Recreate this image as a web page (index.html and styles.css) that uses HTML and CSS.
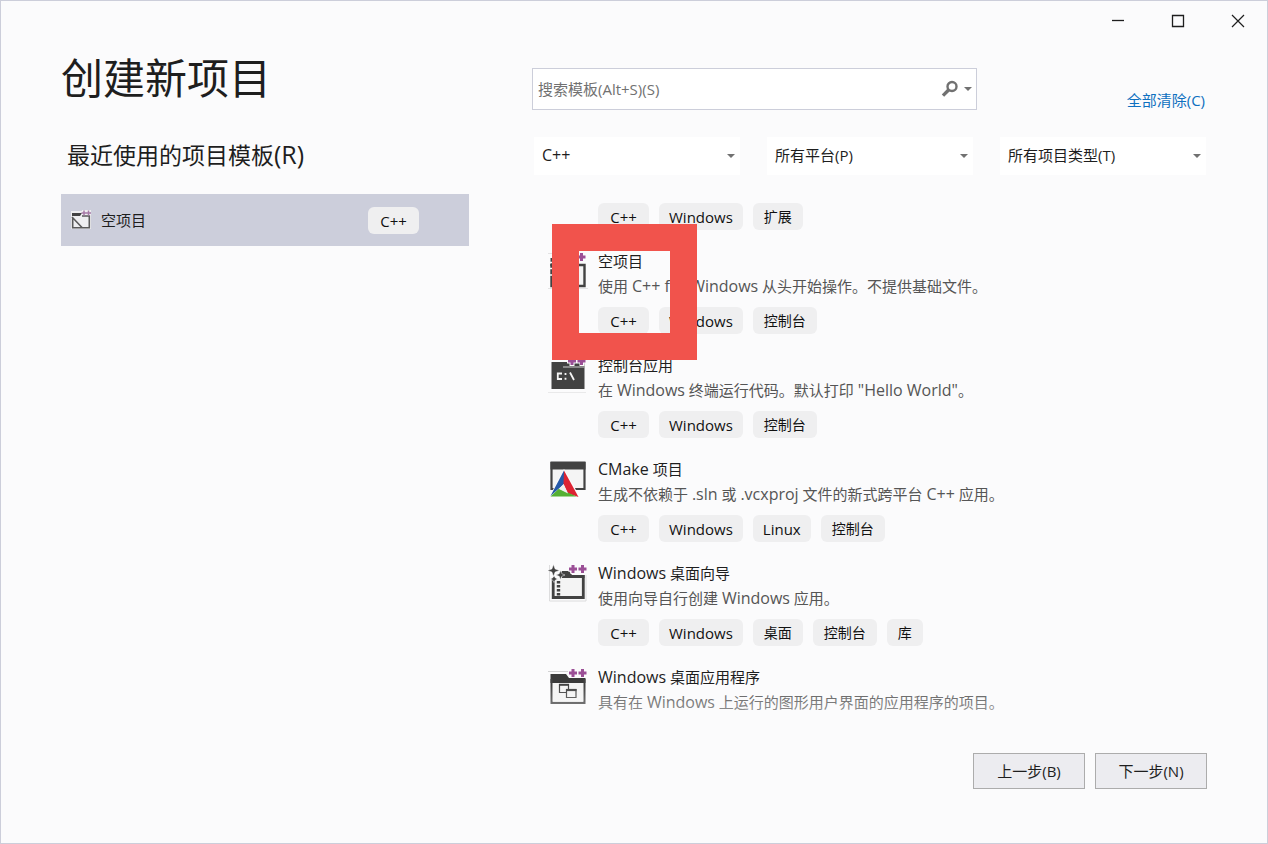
FILE: index.html
```html
<!DOCTYPE html>
<html lang="zh-CN">
<head>
<meta charset="utf-8">
<meta name="viewport" content="width=device-width, initial-scale=1">
<title>创建新项目</title>
<link rel="stylesheet" href="styles.css">
</head>
<body>
<svg class="sprite" aria-hidden="true">
  <symbol id="plusplus" viewBox="0 0 20 10">
    <path d="M5 0v10M0 5h10M15 0v10M10 5h10" stroke="#fbfbfc" stroke-width="5"/>
    <path d="M5 1v8M1 5h8M14.500 1v8M10.500 5h8" stroke="#9b4f96" stroke-width="3"/>
  </symbol>
  <symbol id="caret" viewBox="0 0 8 4"><path d="M0 0h8L4 4z" fill="#717171"/></symbol>
</svg>
<div class="window">
  <header class="titlebar">
    <button type="button" aria-label="最小化"><svg width="14" height="14" viewBox="0 0 14 14"><path d="M1 6.500h12" stroke="#1e1e1e" stroke-width="1.300"/></svg></button>
    <button type="button" aria-label="最大化"><svg width="14" height="14" viewBox="0 0 14 14"><path d="M1.500 1.500h11v11h-11z" fill="none" stroke="#1e1e1e" stroke-width="1.300"/></svg></button>
    <button type="button" aria-label="关闭"><svg width="14" height="14" viewBox="0 0 14 14"><path d="M1 1l12 12M13 1L1 13" stroke="#1e1e1e" stroke-width="1.200"/></svg></button>
  </header>

  <main class="content">
    <section class="recent">
      <h1>创建新项目</h1>
      <h2>最近使用的项目模板<span class="latin-large">(R)</span></h2>
      <button type="button" class="recent-item">
        <svg width="20" height="20" viewBox="0 0 20 20"><path d="M0 1h20v18H0z" fill="#eeeef0"/><path d="M1 3h10l-2 3H1z" fill="#424242"/><path d="M1.700 8v9.800h16.600V6H11M1 7l10 10.500" fill="none" stroke="#5a5a5a" stroke-width="1.600"/><path d="M11 0h9v5h-9z" fill="#eeeef0"/><path d="M13 .5v5M10.500 3h5M17.500 .5v5M15.500 3h4.500" stroke="#a77aa6" stroke-width="1.500"/></svg>
        <span class="recent-name">空项目</span>
        <span class="tag latin-tag cpp">C++</span>
      </button>
    </section>

    <section class="templates">
      <div class="search-row">
        <div class="search">
          <input type="text" aria-label="搜索模板" placeholder="搜索模板(Alt+S)(S)">
          <button type="button" aria-label="搜索"><svg width="18" height="18" viewBox="0 0 18 18"><circle cx="11" cy="6.500" r="4.500" fill="none" stroke="#717171" stroke-width="2.400"/><path d="M7.800 9.800L2 15.600" stroke="#717171" stroke-width="3.400"/></svg></button>
          <button type="button" aria-label="搜索选项"><svg width="8" height="4"><use href="#caret"/></svg></button>
        </div>
        <a href="#" class="clear">全部清除(C)</a>
      </div>

      <div class="filters">
        <div class="filter"><select aria-label="语言" class="language"><option>C++</option></select><svg width="8" height="4"><use href="#caret"/></svg></div>
        <div class="filter"><select aria-label="平台"><option>所有平台(P)</option></select><svg width="8" height="4"><use href="#caret"/></svg></div>
        <div class="filter"><select aria-label="项目类型"><option>所有项目类型(T)</option></select><svg width="8" height="4"><use href="#caret"/></svg></div>
      </div>

      <div class="list">
        <article class="item">
          <div class="icon"></div>
          <div class="tags"><span class="tag latin-tag cpp">C++</span><span class="tag latin-tag">Windows</span><span class="tag">扩展</span></div>
        </article>

        <article class="item">
          <svg class="icon" viewBox="0 0 40 40"><path d="M0 2.500h26M0 37.500h40" stroke="#ddd" stroke-width=".8"/><path d="M2.500 7H22l-3 6H2.500z" fill="#424242"/><path d="M3.500 13v22h33V14H20" fill="#f4f4f4" stroke="#424242" stroke-width="2.400"/><path d="M3 13l20 21" stroke="#424242" stroke-width="3"/><path d="M2 11.500h3M2 17.500h3M2 24h3" stroke="#fbfbfc" stroke-width="1.500"/><use href="#plusplus" x="19" y="1" width="20" height="10"/></svg>
          <div class="body">
            <h3>空项目</h3>
            <p>使用 <span class="latin">C++ for Windows</span> 从头开始操作。不提供基础文件。</p>
            <div class="tags"><span class="tag latin-tag cpp">C++</span><span class="tag latin-tag">Windows</span><span class="tag">控制台</span></div>
          </div>
          <div class="highlight"></div>
        </article>

        <article class="item">
          <svg class="icon" viewBox="0 0 40 40"><path d="M0 37.500h38" stroke="#e4e4e4" stroke-width=".8"/><path d="M3.500 7h33v27h-33z" fill="#424242"/><path d="M15 12h21.500" stroke="#bbb" stroke-width="1.200"/><path d="M14 18.500H9.800v5.500H14M22 17.500l4 7.500M17.500 18v2M17.500 22.800v2" fill="none" stroke="#f4f4f4" stroke-width="1.800"/><use href="#plusplus" x="19" y="1" width="20" height="10"/></svg>
          <div class="body">
            <h3>控制台应用</h3>
            <p>在 <span class="latin">Windows</span> 终端运行代码。默认打印 <span class="latin">"Hello World"</span>。</p>
            <div class="tags"><span class="tag latin-tag cpp">C++</span><span class="tag latin-tag">Windows</span><span class="tag">控制台</span></div>
          </div>
        </article>

        <article class="item">
          <svg class="icon" viewBox="0 0 40 40"><path d="M3.500 4v26h33V4z" fill="#f4f4f4" stroke="#424242" stroke-width="2.200"/><path d="M2.500 2.500h35v8h-35z" fill="#424242"/><path d="M16 10L1 38h31z" fill="#fbfbfc"/><path d="M16 11.500L2.500 37l13.500-12z" fill="#2458a8"/><path d="M16 11.500L30.500 38 20 34.500 15.500 25z" fill="#dc2332"/><path d="M2.500 37.500h26L11 29.500z" fill="#55b033"/><path d="M15.500 25l4.500 9.500-9-4.500z" fill="#eef0ee"/></svg>
          <div class="body">
            <h3><span class="latin">CMake</span> 项目</h3>
            <p>生成不依赖于 <span class="latin">.sln</span> 或 <span class="latin">.vcxproj</span> 文件的新式跨平台 <span class="latin">C++</span> 应用。</p>
            <div class="tags"><span class="tag latin-tag cpp">C++</span><span class="tag latin-tag">Windows</span><span class="tag latin-tag">Linux</span><span class="tag">控制台</span></div>
          </div>
        </article>

        <article class="item">
          <svg class="icon" viewBox="0 0 40 40"><path d="M1.500 2v36H38V12" fill="none" stroke="#d6d6d6" stroke-width=".8"/><path d="M12 12l2-4h7l3 4h12.500v3H12z" fill="#424242"/><path d="M5.200 17v17.500h30.100V13.500H14" fill="#f4f4f4" stroke="#424242" stroke-width="2.800"/><path d="M10.500 18v14.500" stroke="#424242" stroke-width="3.400" stroke-dasharray="2.500 1.500"/><path d="M5.500 1.500l1.600 4.400 4.400 1.600-4.400 1.600-1.600 4.400-1.600-4.400L-.5 7.500l4.400-1.600zM12.500 7.500l1.300 3.200 3.200 1.300-3.200 1.300-1.300 3.200-1.300-3.200L8 12l3.200-1.300zM6 12.500l1.200 2.300 2.300 1.200-2.300 1.200L6 19.500l-1.200-2.300L2.500 16l2.300-1.200z" fill="#424242" stroke="#fbfbfc" stroke-width=".5"/><use href="#plusplus" x="20" y="1" width="20" height="10"/></svg>
          <div class="body">
            <h3><span class="latin">Windows</span> 桌面向导</h3>
            <p>使用向导自行创建 <span class="latin">Windows</span> 应用。</p>
            <div class="tags"><span class="tag latin-tag cpp">C++</span><span class="tag latin-tag">Windows</span><span class="tag">桌面</span><span class="tag">控制台</span><span class="tag">库</span></div>
          </div>
        </article>

        <article class="item">
          <svg class="icon" viewBox="0 0 40 40"><path d="M0 4.500h20" stroke="#c8c8c8" stroke-width=".8"/><path d="M2.500 7H18l3 4h16.500v5h-35z" fill="#3a3a3a"/><path d="M3.600 12v23.800h32.800V12" fill="none" stroke="#424242" stroke-width="2.200"/><path d="M4.700 16h30.600v18.700H4.700z" fill="#f4f4f4"/><path d="M11.500 17.500h9v8h-9z" fill="#f4f4f4" stroke="#424242" stroke-width="1.200"/><path d="M11 17.800h10" stroke="#424242" stroke-width="2"/><path d="M18.500 22.500h9.500v8h-9.500z" fill="#f4f4f4" stroke="#424242" stroke-width="1.200"/><path d="M18 23h10.500" stroke="#424242" stroke-width="2.200"/><use href="#plusplus" x="20" y="1" width="20" height="10"/></svg>
          <div class="body">
            <h3><span class="latin">Windows</span> 桌面应用程序</h3>
            <p>具有在 <span class="latin">Windows</span> 上运行的图形用户界面的应用程序的项目。</p>
          </div>
        </article>
      </div>
    </section>
  </main>

  <footer class="actions">
    <button type="button">上一步(B)</button>
    <button type="button">下一步(N)</button>
  </footer>
</div>
</body>
</html>
```
FILE: styles.css
```css
* { box-sizing: border-box; }

body {
  margin: 0;
  background: #fbfbfc;
  color: #1e1e1e;
  font: 15px/25px "Open Sans", "Noto Sans CJK SC", sans-serif;
}

button, input, select { font: inherit; color: inherit; }
button { border: 0; padding: 0; background: none; }
h1, h2, h3, p { margin: 0; font-weight: 400; }
svg { display: block; flex: none; }
.sprite { position: absolute; width: 0; height: 0; }

.window {
  display: flex;
  flex-direction: column;
  height: 100vh;
  min-height: 600px;
  border: 1px solid #ccceda;
}

.titlebar { display: flex; justify-content: flex-end; }
.titlebar button {
  display: grid;
  place-items: center;
  width: 60px;
  height: 40px;
  padding-left: 2px;
}

.content {
  flex: 1;
  min-height: 0;
  display: grid;
  grid-template-columns: 408fr 675fr;
  grid-template-rows: minmax(0, 1fr);
  gap: 63px;
  padding: 0 60px;
}

.recent { padding-top: 8px; }
h1 { font-size: 42px; line-height: 58px; }
h2 {
  margin-top: 31px;
  padding-left: 6px;
  font-size: 23px;
  line-height: 34px;
}
.latin-large { font-size: 25px; line-height: 30px; }
.recent-item {
  display: flex;
  align-items: center;
  gap: 10px;
  width: 100%;
  height: 52px;
  margin-top: 22px;
  padding: 0 50px 0 10px;
  background: #cccedb;
  text-align: left;
}
.recent-name { flex: 1; }

.templates {
  display: flex;
  flex-direction: column;
  min-height: 0;
  padding-top: 27px;
}
.search-row {
  display: grid;
  grid-template-columns: 446fr 229fr;
  align-items: end;
  padding-right: 2px;
}
.search {
  display: flex;
  align-items: center;
  gap: 5px;
  height: 42px;
  padding: 0 4px 0 5px;
  border: 1px solid #ccceda;
  background: #fff;
}
.search input {
  flex: 1;
  min-width: 0;
  border: 0;
  padding: 0;
  outline: 0;
  background: none;
}
.search input::placeholder { color: #717171; opacity: 1; }
.clear {
  justify-self: end;
  color: #0e70c0;
  line-height: 20px;
  text-decoration: none;
}

.filters {
  display: grid;
  grid-template-columns: repeat(3, 1fr);
  gap: 27px;
  margin-top: 27px;
  padding: 0 1px 0 2px;
}
.filter { position: relative; background: #fff; }
.filter select {
  appearance: none;
  display: block;
  width: 100%;
  height: 38px;
  padding: 0 24px 2px 8px;
  border: 0;
  background: none;
}
.filter .language { font-size: 16px; }
.filter svg { position: absolute; right: 5px; top: 17px; pointer-events: none; }

.list {
  position: relative;
  flex: 1;
  min-height: 0;
  margin-top: 28px;
  padding-left: 16px;
  overflow: hidden;
}
.list::after {
  content: "";
  position: absolute;
  left: 0;
  right: 0;
  bottom: 0;
  height: 40px;
  background: linear-gradient(#fbfbfc00, #fbfbfc88);
}
.item {
  position: relative;
  display: flex;
  gap: 10px;
  padding-bottom: 19px;
}
.icon { flex: none; width: 40px; }
svg.icon { height: 40px; margin-top: 2px; }
h3 { font-size: 15px; line-height: 25px; }
.item p { color: #555; }
.latin { font-size: 16px; line-height: 20px; }
.tags { display: flex; gap: 10px; }
.body .tags { margin-top: 8px; }
.tag {
  padding: 1px 11px 0;
  border-radius: 6px;
  background: #efeff0;
  color: #111;
  font-size: 14px;
  line-height: 26px;
  text-align: center;
}
.latin-tag { padding: 1px 10px 0; font-size: 15px; }
.cpp { min-width: 51px; }

.highlight {
  position: absolute;
  left: 4px;
  top: -25px;
  width: 145px;
  height: 136px;
  border: 27px solid #f1534c;
  z-index: 1;
}

.actions {
  display: flex;
  justify-content: flex-end;
  gap: 10px;
  padding: 28px 60px 54px;
}
.actions button {
  width: 112px;
  height: 36px;
  border: 1px solid #acacac;
  background: #ececf0;
}
```
